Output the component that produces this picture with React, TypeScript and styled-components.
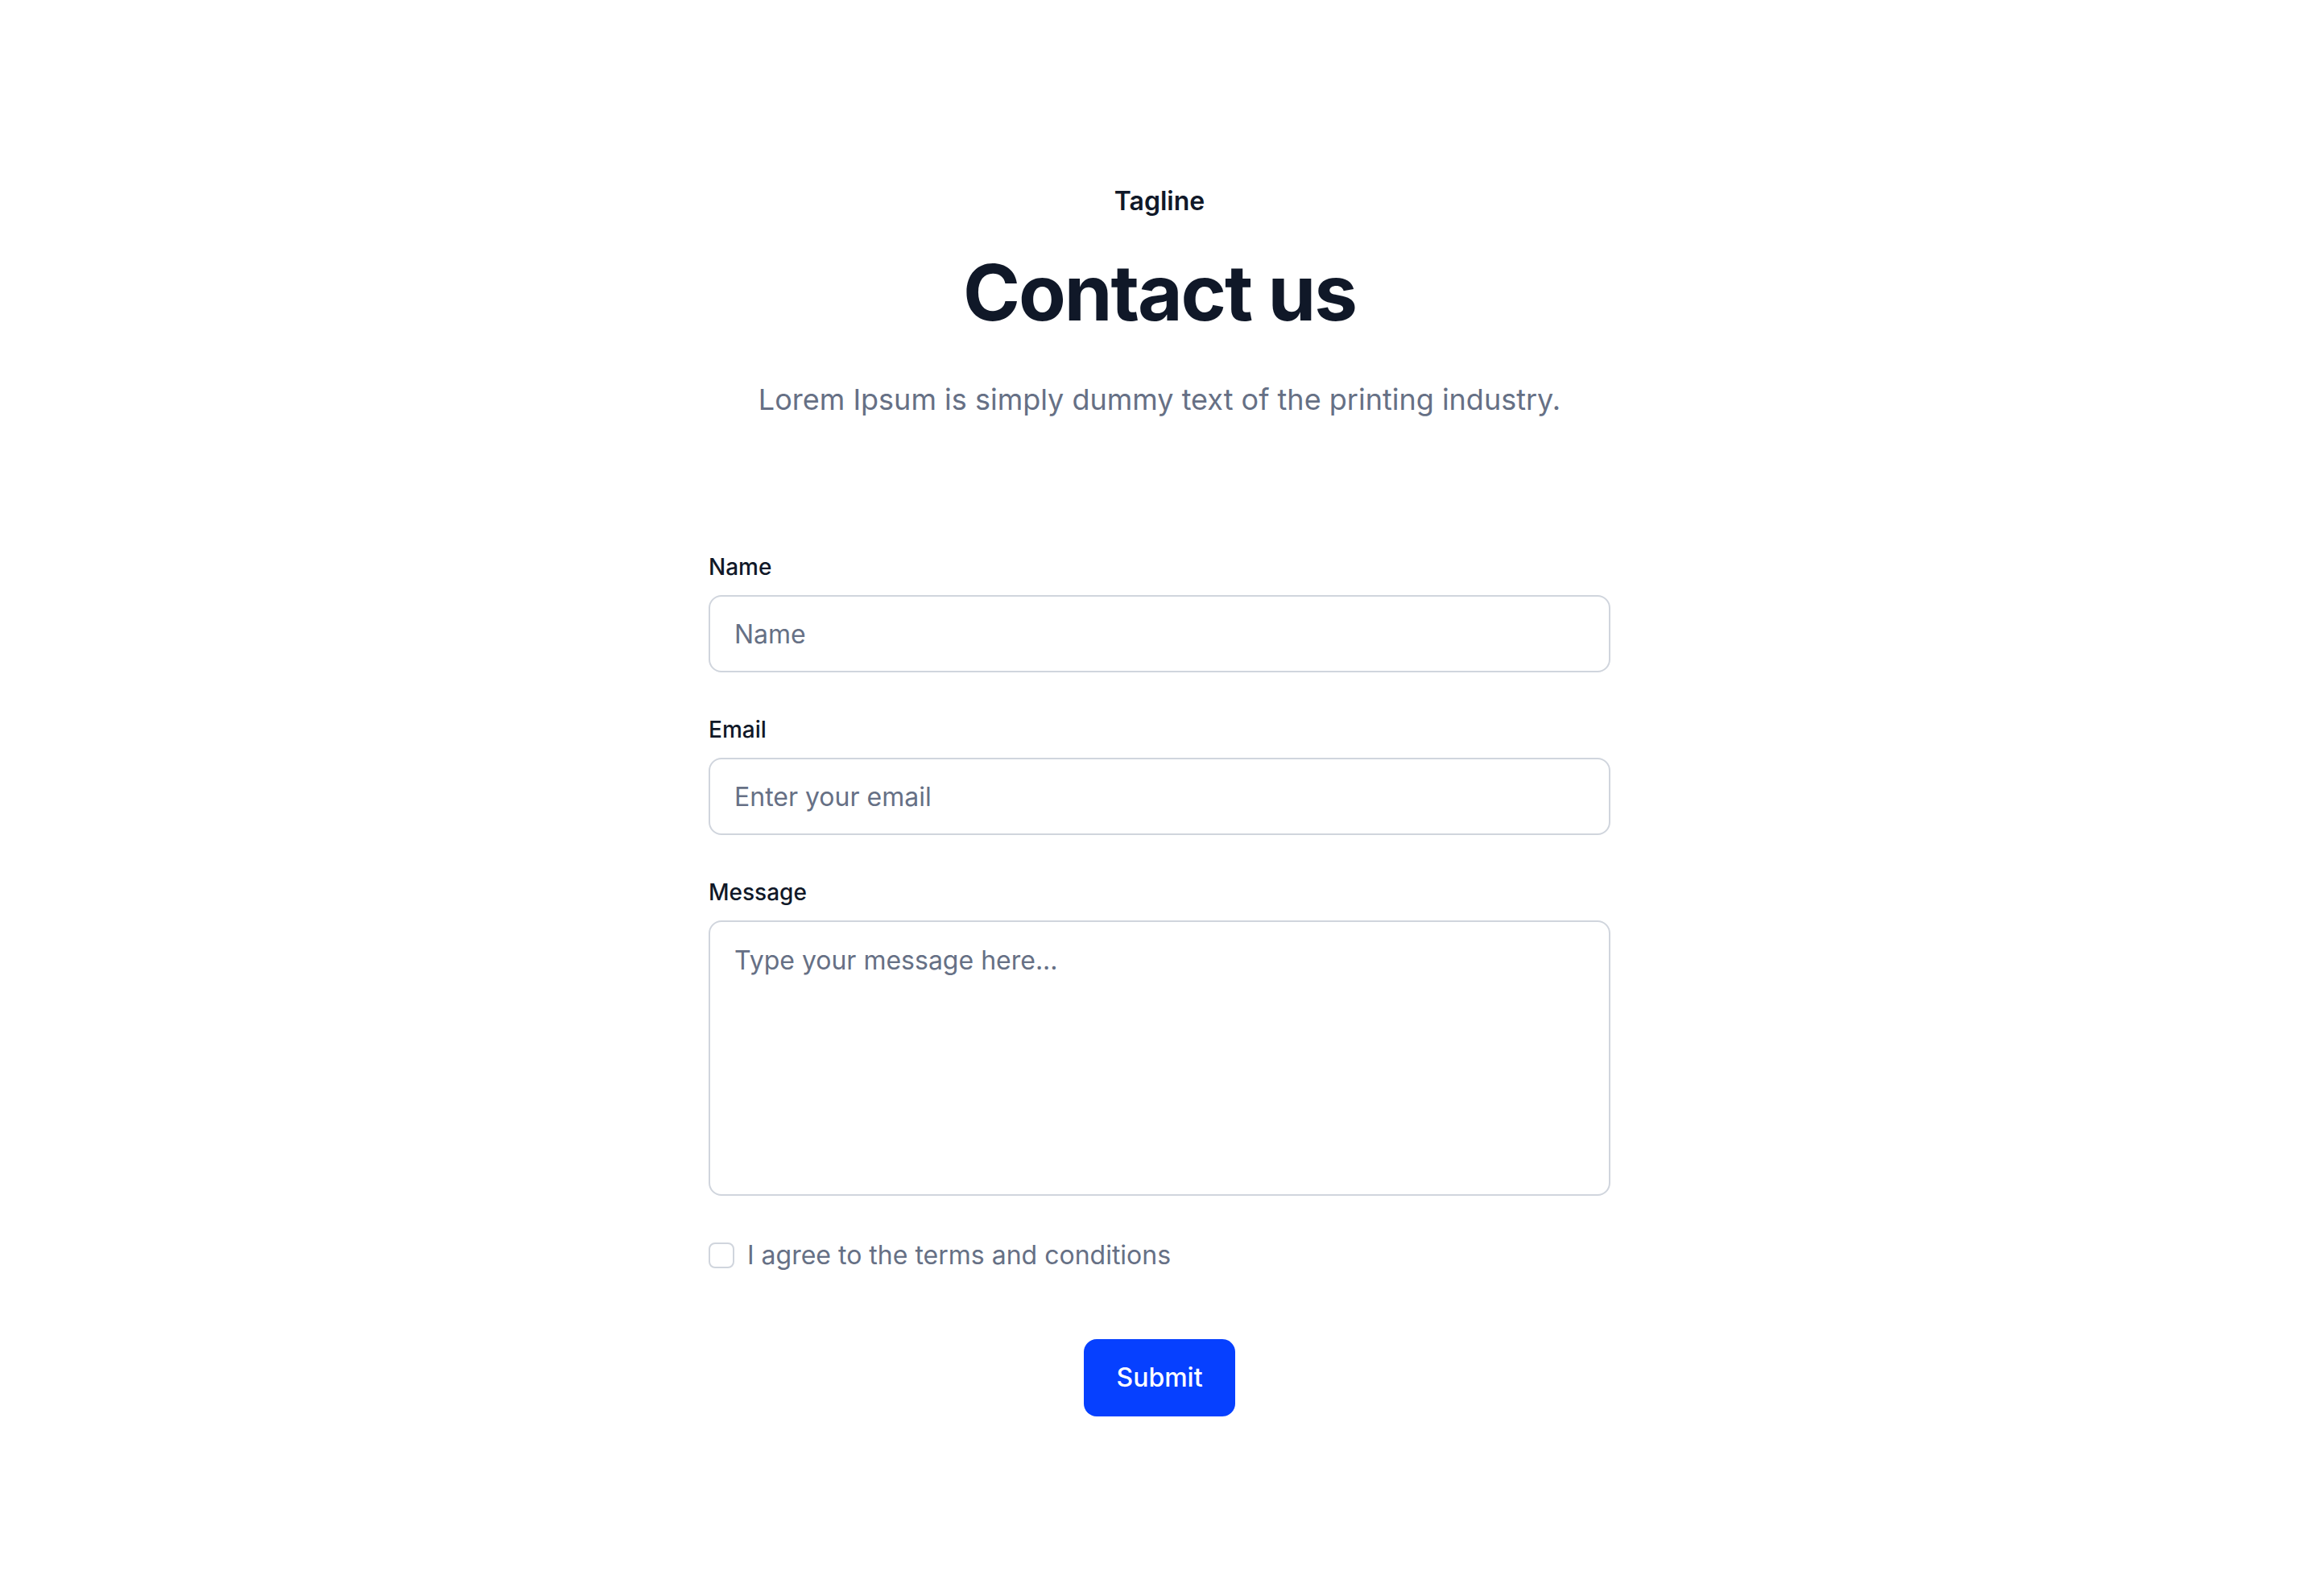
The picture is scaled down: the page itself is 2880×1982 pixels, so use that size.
import React from "react";
import styled, { createGlobalStyle } from "styled-components";

const GlobalStyle = createGlobalStyle`
  html, body {
    margin: 0;
    padding: 0;
    background: #ffffff;
  }
  body {
    font-family: Inter, "Noto Sans", "Liberation Sans", sans-serif;
    color: #101828;
    -webkit-font-smoothing: antialiased;
  }
  * { box-sizing: border-box; }
`;

const Page = styled.section`
  display: flex;
  flex-direction: column;
  align-items: center;
  padding: 226px 0 222px;
  background: #ffffff;
`;

const Header = styled.header`
  display: flex;
  flex-direction: column;
  align-items: center;
  text-align: center;
`;

const Tagline = styled.p`
  margin: 0;
  font-size: 32px;
  line-height: 48px;
  font-weight: 600;
  color: #101828;
`;

const Title = styled.h1`
  margin: 32px 0 0;
  font-size: 96px;
  line-height: 115px;
  font-weight: 700;
  letter-spacing: -0.022em;
  color: #101828;
`;

const Lead = styled.p`
  margin: 48px 0 0;
  font-size: 36px;
  line-height: 54px;
  font-weight: 400;
  color: #667085;
`;

const Form = styled.form`
  width: 1120px;
  margin-top: 160px;
  display: flex;
  flex-direction: column;
`;

const Fields = styled.div`
  display: flex;
  flex-direction: column;
  gap: 50px;
`;

const Field = styled.div`
  display: flex;
  flex-direction: column;
  gap: 14px;
`;

const Label = styled.label`
  font-size: 28px;
  line-height: 42px;
  font-weight: 500;
  color: #101828;
`;

const fieldBase = `
  width: 100%;
  border: 2px solid #d0d5dd;
  border-radius: 16px;
  background: #ffffff;
  font-family: Inter, "Noto Sans", "Liberation Sans", sans-serif;
  font-size: 32px;
  line-height: 48px;
  color: #101828;
  outline: none;
  &::placeholder { color: #667085; opacity: 1; }
`;

const Input = styled.input`
  ${fieldBase}
  height: 96px;
  padding: 0 30px;
`;

const TextArea = styled.textarea`
  ${fieldBase}
  height: 342px;
  padding: 24px 30px;
  resize: none;
  display: block;
`;

const CheckRow = styled.label`
  margin-top: 50px;
  display: flex;
  align-items: center;
  gap: 16px;
  font-size: 32px;
  line-height: 48px;
  color: #667085;
  cursor: pointer;
`;

const CheckBox = styled.span`
  width: 32px;
  height: 32px;
  flex: none;
  border: 2px solid #d0d5dd;
  border-radius: 8px;
  background: #ffffff;
`;

const Actions = styled.div`
  margin-top: 80px;
  display: flex;
  justify-content: center;
`;

const SubmitButton = styled.button`
  height: 96px;
  padding: 0 40px;
  border: none;
  border-radius: 16px;
  background: #0640ff;
  color: #ffffff;
  font-family: Inter, "Noto Sans", "Liberation Sans", sans-serif;
  font-size: 32px;
  line-height: 48px;
  font-weight: 500;
  cursor: pointer;
`;

export default function App() {
  return (
    <>
      <GlobalStyle />
      <Page>
        <Header>
          <Tagline>Tagline</Tagline>
          <Title>Contact us</Title>
          <Lead>Lorem Ipsum is simply dummy text of the printing industry.</Lead>
        </Header>
        <Form onSubmit={(e) => e.preventDefault()}>
          <Fields>
            <Field>
              <Label htmlFor="name">Name</Label>
              <Input id="name" type="text" placeholder="Name" />
            </Field>
            <Field>
              <Label htmlFor="email">Email</Label>
              <Input id="email" type="email" placeholder="Enter your email" />
            </Field>
            <Field>
              <Label htmlFor="message">Message</Label>
              <TextArea id="message" placeholder="Type your message here..." />
            </Field>
          </Fields>
          <CheckRow>
            <CheckBox />
            I agree to the terms and conditions
          </CheckRow>
          <Actions>
            <SubmitButton type="submit">Submit</SubmitButton>
          </Actions>
        </Form>
      </Page>
    </>
  );
}
